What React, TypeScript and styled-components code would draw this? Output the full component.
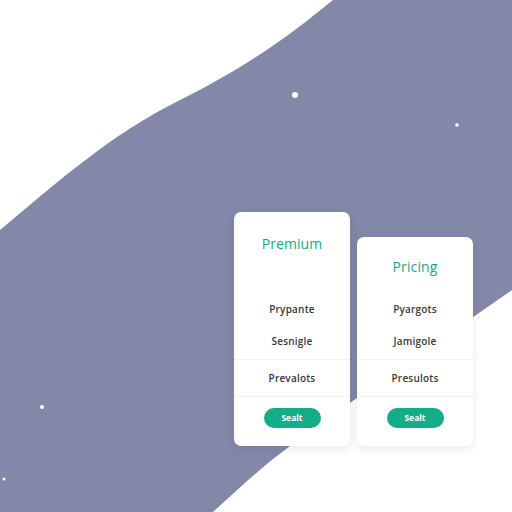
import styled, { createGlobalStyle } from "styled-components";

const GlobalStyle = createGlobalStyle`
  html, body {
    margin: 0;
    padding: 0;
    background: #ffffff;
  }
  body {
    font-family: "Open Sans", "Liberation Sans", sans-serif;
  }
`;

const Page = styled.div`
  position: relative;
  width: 512px;
  height: 512px;
  overflow: hidden;
  background: #ffffff;
`;

const Backdrop = styled.svg`
  position: absolute;
  inset: 0;
  width: 512px;
  height: 512px;
  z-index: 0;
`;

const Cards = styled.div`
  position: relative;
  z-index: 1;
  display: flex;
  align-items: flex-end;
  gap: 7px;
  padding: 212px 0 0 234px;
`;

const Card = styled.div<{ $height: number }>`
  width: 116px;
  height: ${(p) => p.$height}px;
  display: flex;
  flex-direction: column;
  background: #ffffff;
  border-radius: 7px;
  box-shadow: 0 3px 10px rgba(40, 44, 70, 0.1);
  overflow: hidden;
`;

const Title = styled.h2`
  margin: 0;
  height: 62px;
  display: flex;
  align-items: center;
  justify-content: center;
  font-size: 14px;
  font-weight: 400;
  color: #1ea487;
  letter-spacing: 0.1px;
`;

const Body = styled.div`
  margin-top: auto;
  display: flex;
  flex-direction: column;
`;

const Row = styled.div<{ $h: number; $lift: number; $divider?: boolean }>`
  height: ${(p) => p.$h}px;
  display: flex;
  align-items: center;
  justify-content: center;
  padding-bottom: ${(p) => p.$lift}px;
  font-size: 10px;
  font-weight: 600;
  color: #36373c;
  letter-spacing: 0.2px;
  border-bottom: ${(p) => (p.$divider ? "1px solid #f2f2f4" : "none")};
  box-sizing: border-box;
`;

const Footer = styled.div`
  display: flex;
  justify-content: center;
  padding: 11px 0 18px;
`;

const Button = styled.button`
  width: 57px;
  height: 20px;
  border: 0;
  border-radius: 10px;
  background: #15ac88;
  color: #ffffff;
  font-family: "Open Sans", "Liberation Sans", sans-serif;
  font-size: 8.5px;
  font-weight: 700;
  padding: 0 0 1px;
  cursor: pointer;
`;

type Plan = {
  title: string;
  height: number;
  features: string[];
};

const plans: Plan[] = [
  { title: "Premium", height: 234, features: ["Prypante", "Sesnigle", "Prevalots"] },
  { title: "Pricing", height: 209, features: ["Pyargots", "Jamigole", "Presulots"] },
];

function Background() {
  return (
    <Backdrop viewBox="0 0 512 512">
      <path
        d="M0 230 C60 180 110 135 180 100 S290 35 333 0 L512 0 L512 290 C440 340 360 395 290 446 C260 468 235 492 213 512 L0 512 Z"
        fill="#8388a8"
      />
      <circle cx="295" cy="95" r="3" fill="#ffffff" />
      <circle cx="457" cy="125" r="1.8" fill="#ffffff" />
      <circle cx="42" cy="407" r="2" fill="#ffffff" />
      <circle cx="4" cy="479" r="1.5" fill="#ffffff" />
    </Backdrop>
  );
}

export default function App() {
  return (
    <Page>
      <GlobalStyle />
      <Background />
      <Cards>
        {plans.map((plan) => (
          <Card key={plan.title} $height={plan.height}>
            <Title>{plan.title}</Title>
            <Body>
              <Row $h={31} $lift={4}>
                {plan.features[0]}
              </Row>
              <Row $h={34} $lift={4} $divider>
                {plan.features[1]}
              </Row>
              <Row $h={37} $lift={0} $divider>
                {plan.features[2]}
              </Row>
            </Body>
            <Footer>
              <Button>Sealt</Button>
            </Footer>
          </Card>
        ))}
      </Cards>
    </Page>
  );
}
